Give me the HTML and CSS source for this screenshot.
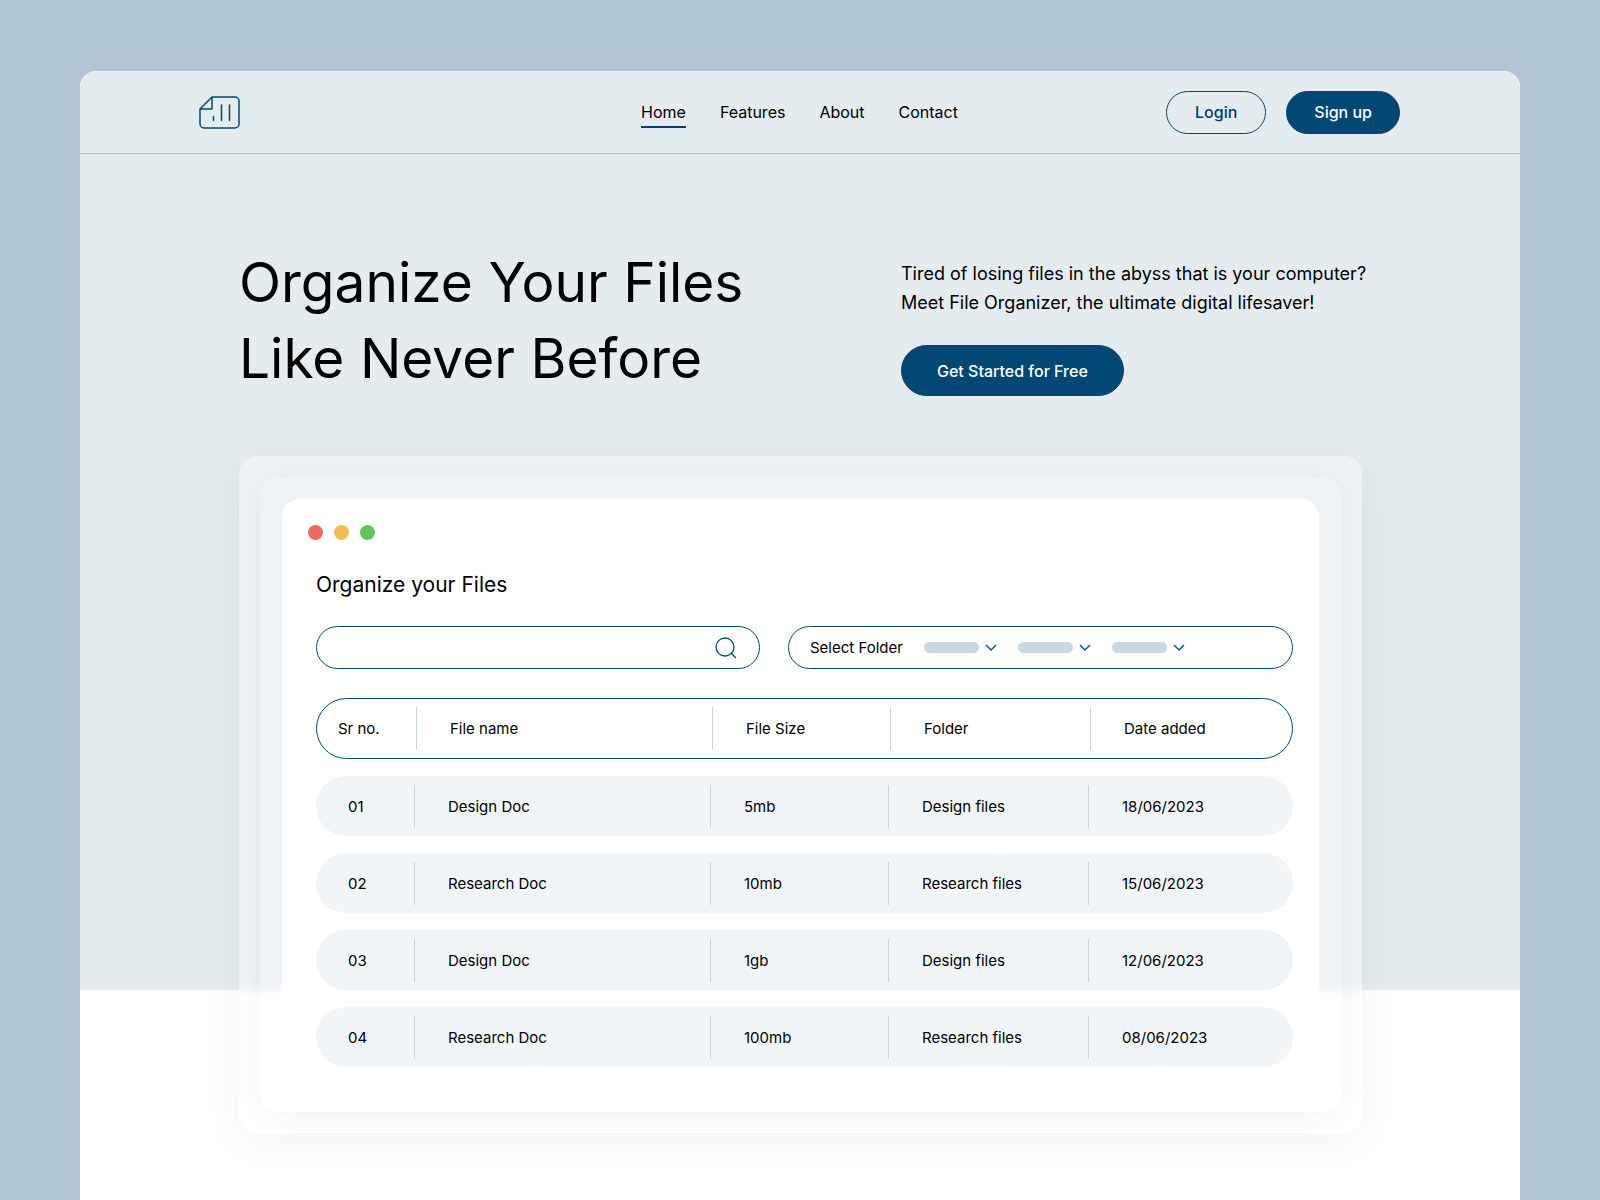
FILE: index.html
```html
<!DOCTYPE html>
<html lang="en">
<head>
  <meta charset="UTF-8">
  <title>File Organizer</title>
  <meta name="viewport" content="width=device-width, initial-scale=1.0">
  <link rel="stylesheet" href="styles.css">
</head>
<body>
  <div class="page">
    <header class="navbar">
      <a href="#" class="logo" aria-label="File Organizer">
        <svg width="41" height="33" viewBox="0 0 41 33" fill="none" stroke="#004a78" stroke-width="1.5" stroke-linejoin="round" stroke-linecap="round">
          <path d="M13 1H36a4 4 0 0 1 4 4V28a4 4 0 0 1-4 4H5a4 4 0 0 1-4-4V13L13 1V13H1"/>
          <path d="M14.500 20.500v4M22.500 9v15.500M30.500 9v15.500"/>
        </svg>
      </a>
      <nav class="nav-links">
        <a href="#" class="active">Home</a>
        <a href="#">Features</a>
        <a href="#">About</a>
        <a href="#">Contact</a>
      </nav>
      <div class="nav-buttons">
        <button class="btn btn-outline">Login</button>
        <button class="btn">Sign up</button>
      </div>
    </header>

    <section class="hero">
      <h1>Organize Your Files<br>Like Never Before</h1>
      <div class="hero-text">
        <p>Tired of losing files in the abyss that is your computer?<br>Meet File Organizer, the ultimate digital lifesaver!</p>
        <button class="btn btn-large">Get Started for Free</button>
      </div>
    </section>

    <!-- App window preview -->
    <section class="frame">
      <div class="frame-inner">
        <div class="window">
          <div class="dots">
            <span class="dot red"></span>
            <span class="dot yellow"></span>
            <span class="dot green"></span>
          </div>
          <div class="content">
            <h2>Organize your Files</h2>
            <div class="filters">
              <div class="search">
                <input type="search" aria-label="Search files">
                <svg width="22" height="22" viewBox="0 0 22 22" fill="none" stroke="#004a78" stroke-width="1.3" stroke-linecap="round">
                  <circle cx="10" cy="10" r="9"/>
                  <path d="M16.500 16.500L20.500 20.500"/>
                </svg>
              </div>
              <div class="folders">
                <span class="folders-title">Select Folder</span>
                <label class="folder">
                  <select aria-label="Folder"><option></option></select>
                  <svg width="12" height="7" viewBox="0 0 12 7" fill="none" stroke="#004a78" stroke-width="1.3"><path d="M1 1L6 6L11 1"/></svg>
                </label>
                <label class="folder">
                  <select aria-label="Subfolder"><option></option></select>
                  <svg width="12" height="7" viewBox="0 0 12 7" fill="none" stroke="#004a78" stroke-width="1.3"><path d="M1 1L6 6L11 1"/></svg>
                </label>
                <label class="folder">
                  <select aria-label="File type"><option></option></select>
                  <svg width="12" height="7" viewBox="0 0 12 7" fill="none" stroke="#004a78" stroke-width="1.3"><path d="M1 1L6 6L11 1"/></svg>
                </label>
              </div>
            </div>

            <table class="files">
              <thead>
                <tr><th>Sr no.</th><th>File name</th><th>File Size</th><th>Folder</th><th>Date added</th></tr>
              </thead>
              <tbody>
                <tr><td>01</td><td>Design Doc</td><td>5mb</td><td>Design files</td><td>18/06/2023</td></tr>
                <tr><td>02</td><td>Research Doc</td><td>10mb</td><td>Research files</td><td>15/06/2023</td></tr>
                <tr><td>03</td><td>Design Doc</td><td>1gb</td><td>Design files</td><td>12/06/2023</td></tr>
                <tr><td>04</td><td>Research Doc</td><td>100mb</td><td>Research files</td><td>08/06/2023</td></tr>
              </tbody>
            </table>
          </div>
        </div>
      </div>
    </section>
  </div>
</body>
</html>
```
FILE: styles.css
```css
* { box-sizing: border-box; margin: 0; padding: 0; }
body { font-family: Inter, "Liberation Sans", sans-serif; background: #b2c7d5; color: #000; padding: 71px 5% 0; }
button, input, select { font: inherit; }
a { color: inherit; text-decoration: none; }
svg { display: block; flex: none; }

.page { min-height: calc(100vh - 71px); padding-bottom: 67px; background: #fff; border-radius: 16px 16px 0 0; box-shadow: 0 0 40px rgba(90,80,120,0.05); }

/* Navbar */
.navbar { display: grid; grid-template-columns: 1fr auto 1fr; align-items: center; height: 83px; padding: 0 120px 0 119px; background: #e5ecf0; border-bottom: 1px solid #adc4d3; border-radius: 16px 16px 0 0; }
.logo { justify-self: start; }
.nav-links { display: flex; gap: 34px; font-size: 16px; line-height: 24px; }
.nav-links a { padding: 4px 0 2px; border-bottom: 2px solid transparent; }
.nav-links .active { border-color: #003f7d; }
.nav-buttons { display: flex; justify-content: flex-end; gap: 20px; }

.btn { height: 43px; padding: 0 27px; border: 1px solid #004773; border-radius: 26px; background: #004773; color: #fff; font-size: 16px; font-weight: 500; cursor: pointer; }
.btn-outline { padding: 0 28px; background: transparent; color: #003b75; }
.btn-large { height: 51px; padding: 0 35px; }

/* Hero */
.hero { display: flex; justify-content: space-between; align-items: flex-end; padding: 90px 159px 594px; background: #e5ecf0; }
h1 { font-size: 55px; line-height: 76px; font-weight: 400; }
.hero-text { width: 460px; }
.hero-text p { font-size: 18px; line-height: 29px; margin-bottom: 28px; white-space: nowrap; }

/* Stacked glass frames behind the window */
.frame { margin: -534px 158px 0 159px; padding: 21px; border-radius: 18px; background: rgba(255,255,255,0.3); backdrop-filter: blur(6px); box-shadow: 0 8px 44px rgba(0,0,0,0.05); }
.frame-inner { padding: 22px 22px; border-radius: 18px; background: rgba(255,255,255,0.1); box-shadow: 0 4px 30px rgba(0,0,0,0.05); }
.window { background: #fff; border-radius: 18px; padding: 26px 26px 23px; }

.dots { display: flex; gap: 11px; }
.dot { width: 15px; height: 15px; border-radius: 50%; }
.red { background: #ee6a5f; }
.yellow { background: #f5bd4f; }
.green { background: #61c454; }

.content { padding: 31px 0 0 8px; }
h2 { font-size: 21px; line-height: 28px; font-weight: 400; margin-bottom: 27px; }

.filters { display: grid; grid-template-columns: 444fr 505fr; gap: 28px; margin-bottom: 29px; font-size: 15px; }
.search, .folders { display: flex; align-items: center; height: 43px; border: 1px solid #004a78; border-radius: 22px; }
.search { padding: 0 22px; }
.search input { flex: 1; min-width: 0; height: 100%; border: none; outline: none; background: none; }
.folders { padding: 0 21px; gap: 21px; }
.folder { display: flex; align-items: center; gap: 6px; }
.folder select { appearance: none; width: 55px; height: 11px; border: none; border-radius: 6px; background: #c9d8e1; }

/* File list */
.files { display: block; font-size: 15px; line-height: 43px; }
.files thead, .files tbody { display: block; }
.files tr { display: grid; grid-template-columns: 98fr 296fr 178fr 200fr 205fr; align-items: center; height: 60px; margin-bottom: 17px; border-radius: 30px; background: #f1f5f8; }
.files tbody tr:last-child { margin-bottom: 0; }
.files thead tr { grid-template-columns: 98fr 296fr 178fr 200fr 202fr; height: 61px; padding-left: 1px; border: 1px solid #004a78; border-radius: 31px; background: #fff; }
.files th, .files td { padding-left: 33px; border-left: 1px solid #c3d6e2; font-weight: 400; text-align: left; }
.files th:first-child { padding-left: 20px; border: none; }
.files td:first-child { padding-left: 32px; border: none; }
```
